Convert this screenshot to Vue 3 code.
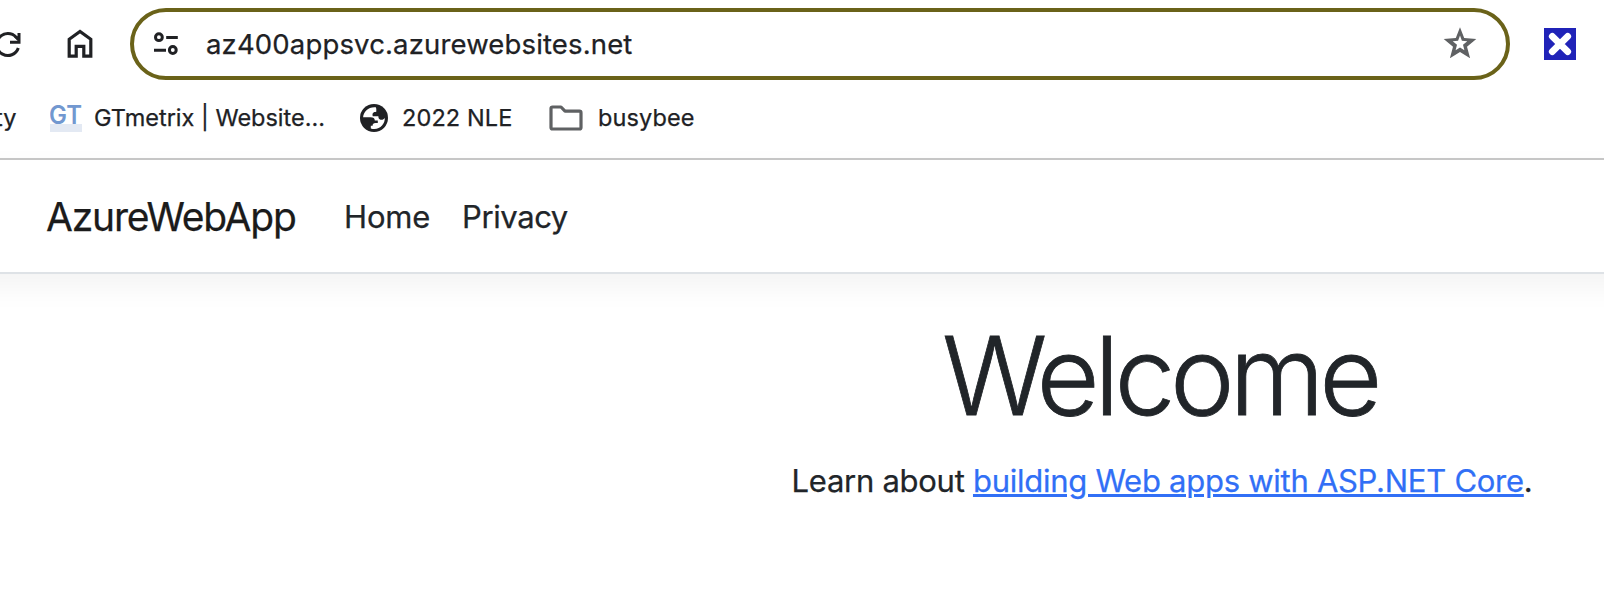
<script setup>
const links = ['Home', 'Privacy']
</script>

<template>
  <div class="page">
    <div class="toolbar">
      <svg class="reload" viewBox="0 0 22 28" width="22" height="28" fill="none" stroke="#202124" stroke-width="3">
        <path d="M18.3 18A11 11 0 1 1 16.2 7.3L18 9" />
        <path d="M10 12.3h9V3" stroke-width="3" />
        <path d="M14 7l5 5V6z" fill="#202124" stroke="none" />
      </svg>
      <svg class="house" viewBox="0 0 26 30" width="26" height="30" fill="none" stroke="#202124" stroke-width="3.2">
        <path d="M2.2 27.2V10.2L13 2.5l10.8 7.7v17H16.8V17.3H9.2v9.9z" />
      </svg>
      <div class="omnibox">
        <svg class="tune" viewBox="0 0 24 24" width="24" height="24" fill="none" stroke="#202124" stroke-width="3">
          <circle cx="4.9" cy="5.2" r="3.4" />
          <circle cx="18.8" cy="18" r="3.4" />
          <path d="M12.2 5.4h11.6M0 18.2h12" />
        </svg>
        <span class="url">az400appsvc.azurewebsites.net</span>
        <svg class="star" viewBox="0 0 34 32" width="34" height="32">
          <path fill="#5f6163" fill-rule="evenodd" d="M17 .2l4.200 10.800 12.100.9-9.300 7.900 3.100 11.400L17 25l-10.100 6.200L10 19.800.7 11.900l12.100-.9zM17 8.500l-1.900 5.300-5.400.4 4.300 3.500-1.400 5.500L17 20.400l4.400 2.800-1.400-5.500 4.300-3.500-5.400-.4z" />
        </svg>
      </div>
      <svg class="ext" viewBox="0 0 32 32" width="32" height="32">
        <path fill="#2023b8" d="M0 0h32v32H0z" />
        <path d="M8.300 8.300l15.400 15.400M23.700 8.300l-15.400 15.400" stroke="#fff" stroke-width="6.800" stroke-linecap="round" />
      </svg>
    </div>

    <div class="bookmarks">
      <span class="cut">ty</span>
      <svg class="gt" viewBox="0 0 32 28" width="32" height="28">
        <path fill="#e3e9f3" d="M0 20h32v8H0z" />
        <text x="-1" y="19.7" textLength="33" lengthAdjust="spacingAndGlyphs">GT</text>
      </svg>
      <span class="gtm">GTmetrix | Website...</span>
      <svg class="globe" viewBox="0 0 28 28" width="28" height="28">
        <circle cx="14" cy="14" r="14" fill="#202124" />
        <path fill="#fff" d="M15.8 3.200C8.600 2.500 3.600 7.500 3.100 13.200H10.500C13.300 13.200 14.800 14.300 14.800 16.500H17.800V19H15.500C13.500 19 12.600 20 12.600 21.800H10.800V24.400C18.800 27 25.200 20.500 24.800 13.800C24 15.400 22.800 15.800 21.700 15.800C18.800 15.800 18.400 14 18.400 12.300H12.800C11.900 9.300 13.200 8 16.300 7.800C16.300 6.400 16.600 5.200 15.800 3.200Z" />
      </svg>
      <span class="nle">2022 NLE</span>
      <svg class="folder" viewBox="0 0 34 26" width="34" height="26" fill="none" stroke="#5f6163" stroke-width="3.2" stroke-linejoin="round">
        <path d="M3.500 2H12L16 6.200H30.500Q32 6.200 32 7.700V22.500Q32 24 30.500 24H3.500Q2 24 2 22.500V3.500Q2 2 3.500 2Z" />
      </svg>
      <span class="bee">busybee</span>
    </div>

    <header class="navbar">
      <span class="brand">AzureWebApp</span>
      <a v-for="l in links" :key="l" :class="['nav', l.toLowerCase()]">{{ l }}</a>
    </header>

    <main class="content">
      <h1>Welcome</h1>
      <p><span class="learn">Learn about </span><a class="docs">building Web apps with ASP.NET Core</a>.</p>
    </main>
  </div>
</template>

<style>
body { margin: 0; background: #fff; overflow: hidden; }
</style>

<style scoped>
.page { width: 1604px; height: 598px; overflow: hidden; background: #fff; font-family: Inter, "Liberation Sans", sans-serif; color: #202124; white-space: nowrap; -webkit-text-stroke: .25px currentColor; }
svg { display: block; flex: none; }
.toolbar { display: flex; align-items: center; height: 88px; box-sizing: border-box; }
.house { margin-left: 45px; }
.omnibox { display: flex; align-items: center; box-sizing: border-box; width: 1380px; height: 72px; margin-left: 37px; border: 4px solid #6a6219; border-radius: 36px; }
.tune { margin-left: 20px; }
.url { margin-left: 28px; font-size: 27.5px; line-height: 36px; letter-spacing: .15px; flex: none; }
.star { margin-left: auto; margin-right: 29px; margin-bottom: 2px; }
.ext { margin-left: 34px; }
.bookmarks { display: grid; grid-template-columns: 50px 44px 266px 42px 147px 49px 1fr; align-items: center; height: 60px; padding-bottom: 10px; border-bottom: 2px solid #c8c8c8; font-size: 23.5px; box-sizing: content-box; }
.bookmarks > span { line-height: 30px; }
.cut { justify-self: start; margin-left: -5px; }
.nle, .bee { letter-spacing: .12px; }
.gt text { font: 600 25px Inter, sans-serif; fill: #7298d0; -webkit-text-stroke: 0; }
.navbar { display: flex; align-items: baseline; box-sizing: border-box; height: 114px; margin: 0 -40px; padding: 29px 0 0 86px; border-bottom: 2px solid #dee2e6; box-shadow: 0 12px 28px rgba(0, 0, 0, .05); color: #212529; }
.brand { width: 298px; font-size: 39px; line-height: 50px; letter-spacing: -1.18px; color: #1b1b1b; position: relative; top: 3px; }
.nav { font-size: 31px; letter-spacing: -.4px; }
.nav.home { width: 118px; letter-spacing: -.15px; }
.content { padding-left: 720px; color: #212529; text-align: center; }
h1 { margin: 41px 0 0; padding-right: 5px; font-size: 109px; line-height: 120px; font-weight: 350; letter-spacing: -5.3px; -webkit-text-stroke: .8px currentColor; }
p { margin: 22px 0 0; font-size: 31px; line-height: 48px; letter-spacing: -.27px; }
.learn { white-space: pre; }
.docs { color: #316ff6; text-decoration: underline; text-decoration-thickness: 3px; text-underline-offset: 2px; }
</style>
